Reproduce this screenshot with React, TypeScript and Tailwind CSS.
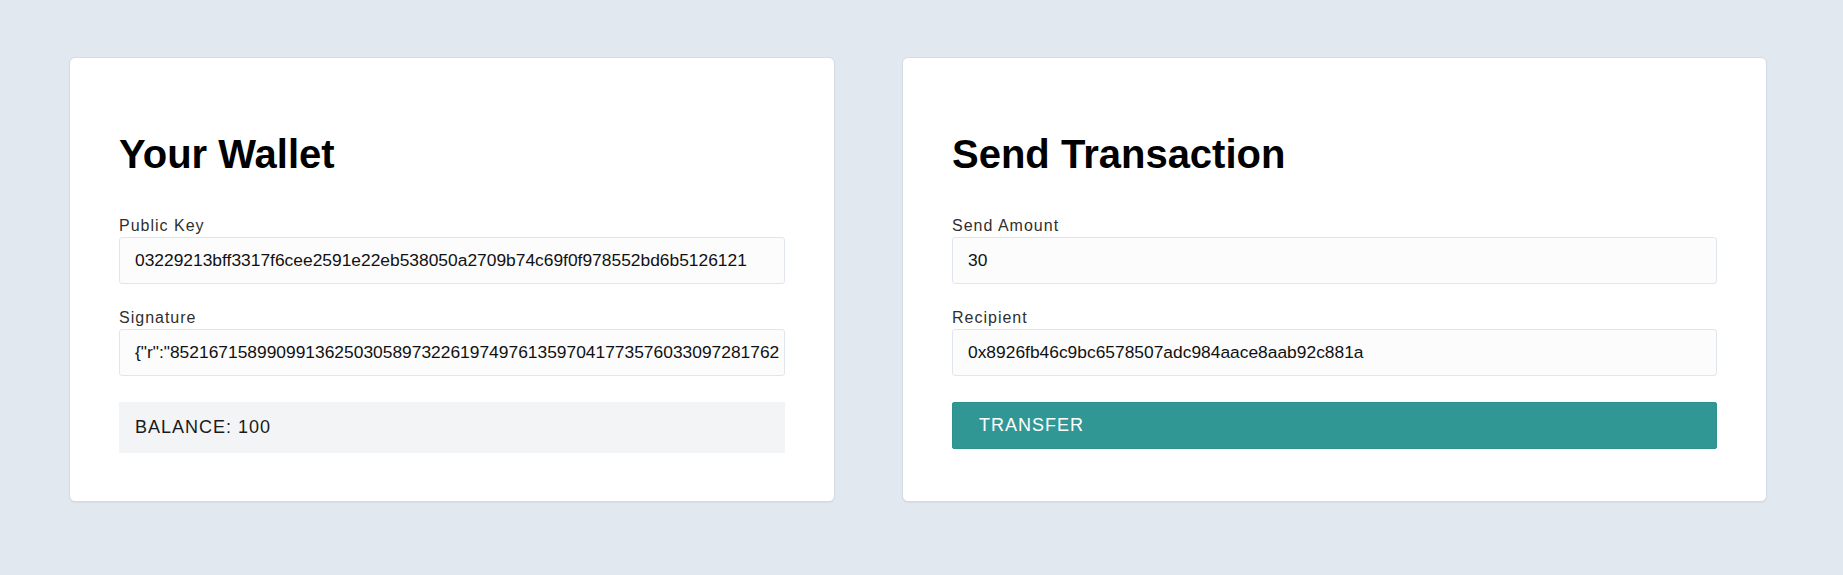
import React from "react";

const font = { fontFamily: '"Liberation Sans", Arial, Helvetica, sans-serif' };

function Field({ label, value }: { label: string; value: string }) {
  return (
    <div className="flex flex-col">
      <div className="h-[20px] leading-[20px] text-[16px] tracking-[1px] text-[#2f2f2f]">{label}</div>
      <div className="mt-[1px] flex h-[47px] items-center overflow-hidden whitespace-nowrap rounded-[3px] border border-[#e1e6ee] bg-[#fcfcfd] pl-[15px] text-[17.4px] text-[#111]">
        {value}
      </div>
    </div>
  );
}

export default function App() {
  return (
    <div
      className="flex min-h-[575px] w-full items-start gap-[67px] bg-[#e2e8f0] pl-[69px] pt-[57px]"
      style={font}
    >
      <div className="flex h-[445px] w-[766px] flex-col rounded-[6px] border border-[#d3dbe6] bg-white px-[49px] pt-[73px] shadow-[0_1px_1px_rgba(0,0,0,0.06)]">
        <h1 className="h-[46px] text-[40px] font-bold leading-[46px] text-black">Your Wallet</h1>
        <div className="mt-[39px]">
          <Field label="Public Key" value="03229213bff3317f6cee2591e22eb538050a2709b74c69f0f978552bd6b5126121" />
        </div>
        <div className="mt-[24px]">
          <Field
            label="Signature"
            value={'{"r":"852167158990991362503058973226197497613597041773576033097281762'}
          />
        </div>
        <div className="mt-[26px] flex h-[51px] items-center bg-[#f3f4f6] pl-[16px] text-[18px] tracking-[1px] text-[#1a1a1a]">
          BALANCE: 100
        </div>
      </div>

      <div className="flex h-[445px] w-[865px] flex-col rounded-[6px] border border-[#d3dbe6] bg-white px-[49px] pt-[73px] shadow-[0_1px_1px_rgba(0,0,0,0.06)]">
        <h1 className="h-[46px] text-[40px] font-bold leading-[46px] text-black">Send Transaction</h1>
        <div className="mt-[39px]">
          <Field label="Send Amount" value="30" />
        </div>
        <div className="mt-[24px]">
          <Field label="Recipient" value="0x8926fb46c9bc6578507adc984aace8aab92c881a" />
        </div>
        <button className="mt-[26px] flex h-[47px] items-center rounded-[2px] border border-[#2d918f] bg-[#319795] pl-[26px] text-[18px] tracking-[1px] text-white">
          TRANSFER
        </button>
      </div>
    </div>
  );
}
